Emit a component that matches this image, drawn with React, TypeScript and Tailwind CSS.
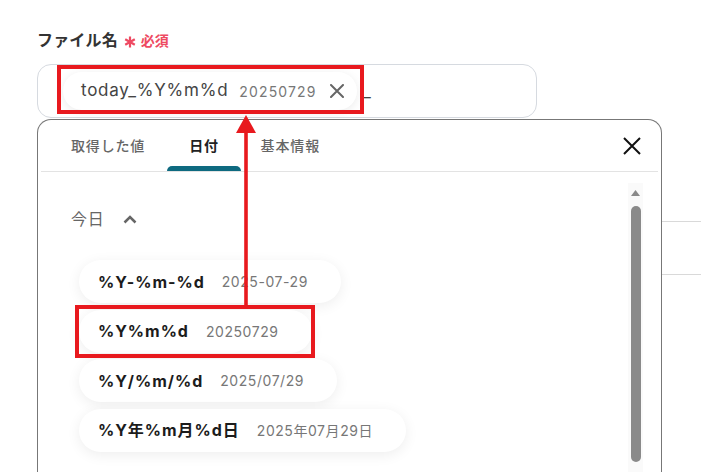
import React from "react";

type DateOption = {
  format: string;
  preview: string;
};

const options: DateOption[] = [
  { format: "%Y-%m-%d", preview: "2025-07-29" },
  { format: "%Y%m%d", preview: "20250729" },
  { format: "%Y/%m/%d", preview: "2025/07/29" },
  { format: "%Y年%m月%d日", preview: "2025年07月29日" },
];

const font = { fontFamily: '"Inter", "Noto Sans CJK JP", sans-serif' };

const App: React.FC = () => {
  return (
    <div
      className="relative w-[701px] h-[472px] overflow-hidden bg-white pl-[37px] pt-[28px]"
      style={font}
    >
      {/* Label */}
      <div className="flex items-center h-[24px] mb-[12px]">
        <span className="text-[16px] font-bold text-[#333] tracking-[0.01em]">ファイル名</span>
        <svg className="ml-[6px] mt-[4px]" width="12" height="12" viewBox="0 0 12 12">
          <path d="M6 0.5V11.5M1.2 3.25L10.8 8.75M10.8 3.25L1.2 8.75" stroke="#ee4a62" strokeWidth="2.2" />
        </svg>
        <span className="ml-[5px] text-[14px] font-bold text-[#ee4a62]">必須</span>
      </div>

      {/* Input */}
      <div className="relative flex items-center w-[500px] h-[54px] rounded-[14px] border border-[#d6dae0] pl-[25px]">
        <div className="flex items-center h-[38px] rounded-full bg-white shadow-[0_2px_10px_rgba(0,0,0,0.08)] pl-[18px] pr-[13px]">
          <span className="text-[17px] text-[#444] tracking-[0.045em]">today_%Y%m%d</span>
          <span className="ml-[11px] text-[14px] text-[#777] tracking-[0.08em]">20250729</span>
          <svg className="ml-[14px]" width="14" height="14" viewBox="0 0 14 14">
            <path d="M1 1L13 13M13 1L1 13" stroke="#666" strokeWidth="2" strokeLinecap="round" />
          </svg>
        </div>
        <span className="ml-[6px] text-[16px] text-[#444]">_</span>

        {/* highlight */}
        <div className="absolute left-[19px] top-[0px] w-[307px] h-[49px] border-[4px] border-[#e8191e]" />
      </div>

      {/* Panel + background */}
      <div className="flex mt-[1px]">
        <div className="w-[625px] h-[380px] rounded-t-[14px] border-[1.5px] border-b-0 border-[#777] bg-white flex flex-col">
          {/* Tabs */}
          <div className="mx-[3px] pl-[8px] flex items-end h-[52px] border-b border-[#e3e3e3] relative">
            <div className="px-[22px] h-full flex items-center text-[14px] text-[#666] tracking-[0.06em] font-medium">
              取得した値
            </div>
            <div className="relative px-[22px] h-full flex items-center text-[14px] text-[#222] font-bold tracking-[0.05em]">
              日付
              <div className="absolute left-0 right-0 bottom-0 h-[5px] rounded-t-[5px] bg-[#0e6a80]" />
            </div>
            <div className="px-[20px] h-full flex items-center text-[14px] text-[#666] tracking-[0.06em] font-medium">
              基本情報
            </div>
            <div className="ml-auto mr-[17px] self-center">
              <svg width="18" height="18" viewBox="0 0 18 18">
                <path d="M1 1L17 17M17 1L1 17" stroke="#111" strokeWidth="2" />
              </svg>
            </div>
          </div>

          {/* Body */}
          <div className="flex flex-1">
            <div className="flex-1 pl-[33px] pt-[35px]">
              <div className="flex items-center h-[24px] gap-[18px]">
                <span className="text-[16px] text-[#666] tracking-[0.05em]">今日</span>
                <svg width="14" height="9" viewBox="0 0 14 9">
                  <path d="M1.5 7.5L7 2L12.5 7.5" fill="none" stroke="#666" strokeWidth="2.5" />
                </svg>
              </div>
              <div className="mt-[29px] ml-[8px] flex flex-col items-start gap-[6.5px]">
                {options.map((o) => (
                  <div
                    key={o.format}
                    className="flex items-center h-[43px] rounded-full bg-white shadow-[0_3px_14px_rgba(0,0,0,0.07)] pl-[19px] pr-[33px] gap-[17px]"
                  >
                    <span className="text-[16px] font-bold text-[#1c1c1c] tracking-[0.06em]">{o.format}</span>
                    <span className="text-[14px] text-[#777] tracking-[0.04em]">{o.preview}</span>
                  </div>
                ))}
              </div>
            </div>

            {/* Scrollbar */}
            <div className="w-[15px] mr-[18px] mt-[11px] bg-[#fafafa] flex flex-col items-center">
              <svg className="mt-[7px]" width="9" height="6" viewBox="0 0 9 6">
                <path d="M4.5 0L9 6H0Z" fill="#8a8a8a" />
              </svg>
              <div className="mt-[10px] w-[10px] h-[256px] rounded-full bg-[#8a8a8a]" />
            </div>
          </div>
        </div>

        {/* background content right of panel */}
        <div className="flex-1 pt-[102px]">
          <div className="h-[54px] border-y border-[#d9d9d9]" />
        </div>
      </div>

      {/* second highlight + arrow */}
      <div className="absolute left-[75px] top-[305px] w-[240px] h-[53px] border-[4px] border-[#e8191e]" />
      <svg className="absolute left-[234px] top-[114px]" width="24" height="193" viewBox="0 0 24 193">
        <path d="M12 1L22 19H2Z" fill="#e8191e" />
        <rect x="10.2" y="17" width="3.6" height="176" fill="#e8191e" />
      </svg>
    </div>
  );
};

export default App;
